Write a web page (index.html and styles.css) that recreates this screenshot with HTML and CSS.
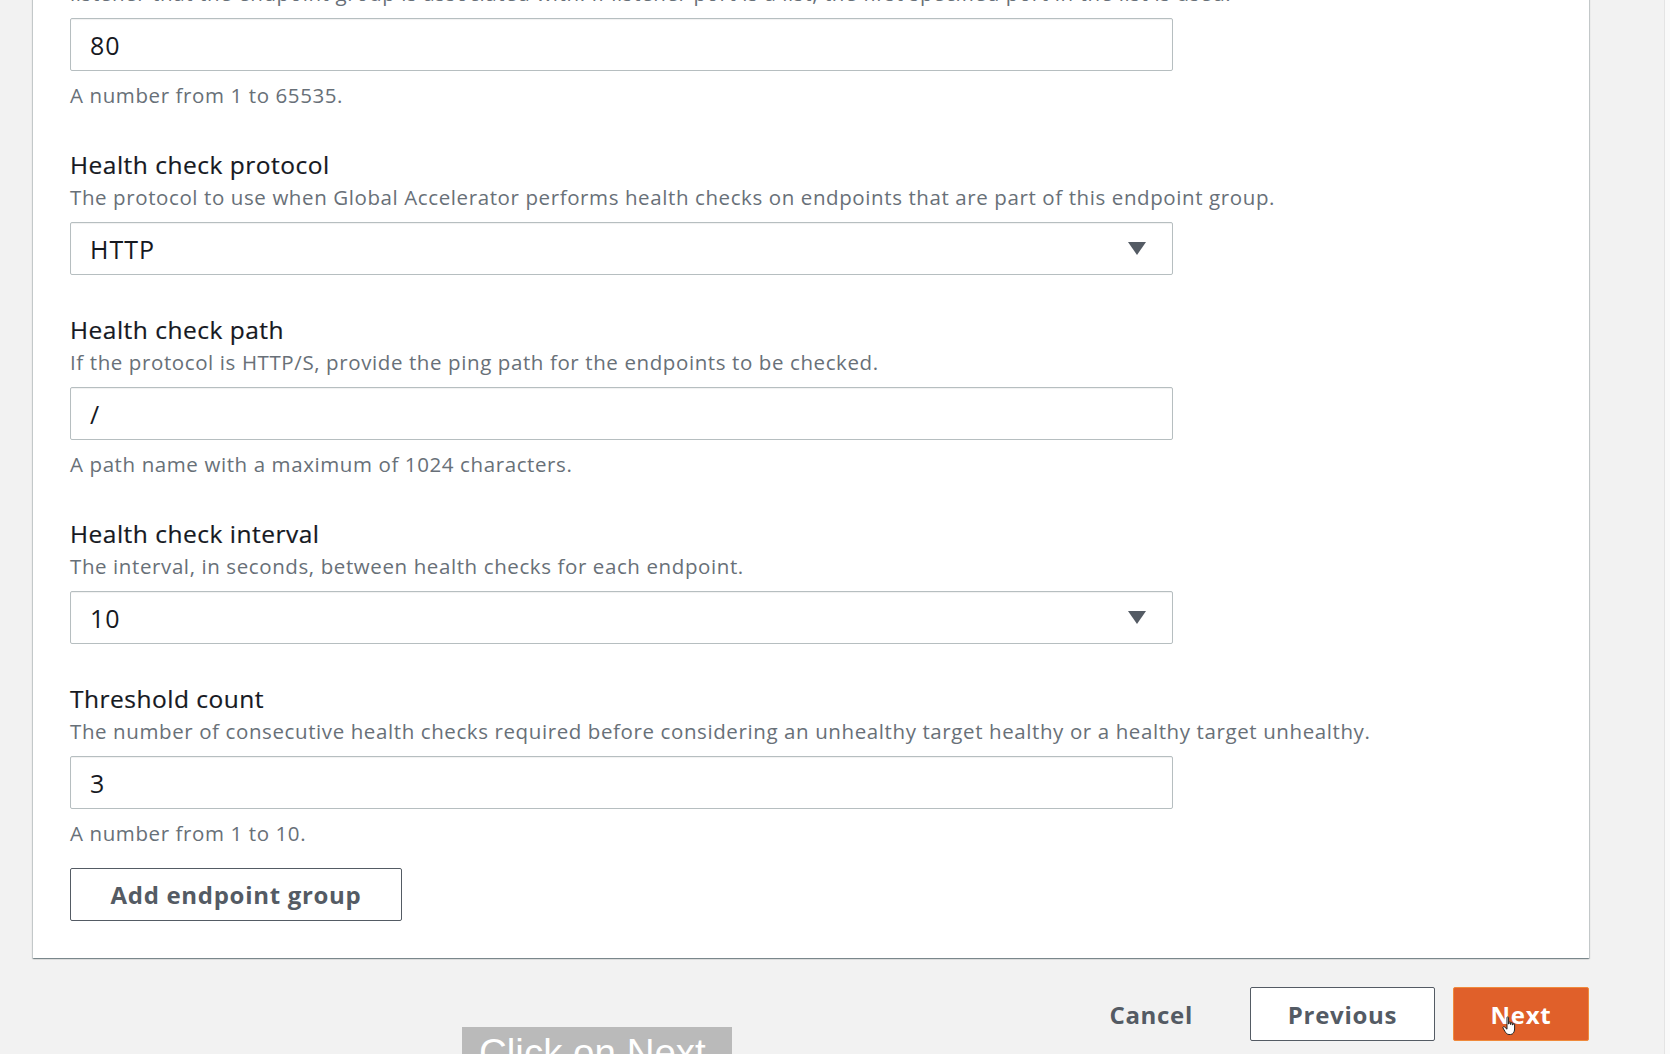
FILE: index.html
```html
<!DOCTYPE html>
<html lang="en">
<head>
<meta charset="utf-8">
<title>Configure endpoint groups</title>
<link rel="stylesheet" href="styles.css">
</head>
<body>
<div class="page">
  <div class="main">
    <section class="card">
      <div class="field first">
        <p class="desc">listener that the endpoint group is associated with. If listener port is a list, the first specified port in the list is used.</p>
        <div class="control input">80</div>
        <p class="hint">A number from 1 to 65535.</p>
      </div>

      <div class="field">
        <div class="label">Health check protocol</div>
        <p class="desc">The protocol to use when Global Accelerator performs health checks on endpoints that are part of this endpoint group.</p>
        <div class="control select">
          <span>HTTP</span>
          <svg class="caret" width="20" height="15" viewBox="0 0 20 15"><path d="M1 1 H19 L10 14 Z" fill="#545b64"/></svg>
        </div>
      </div>

      <div class="field">
        <div class="label">Health check path</div>
        <p class="desc">If the protocol is HTTP/S, provide the ping path for the endpoints to be checked.</p>
        <div class="control input">/</div>
        <p class="hint">A path name with a maximum of 1024 characters.</p>
      </div>

      <div class="field">
        <div class="label">Health check interval</div>
        <p class="desc">The interval, in seconds, between health checks for each endpoint.</p>
        <div class="control select">
          <span>10</span>
          <svg class="caret" width="20" height="15" viewBox="0 0 20 15"><path d="M1 1 H19 L10 14 Z" fill="#545b64"/></svg>
        </div>
      </div>

      <div class="field">
        <div class="label">Threshold count</div>
        <p class="desc">The number of consecutive health checks required before considering an unhealthy target healthy or a healthy target unhealthy.</p>
        <div class="control input">3</div>
        <p class="hint">A number from 1 to 10.</p>
      </div>

      <button class="btn btn-normal add">Add endpoint group</button>
    </section>

    <div class="footer">
      <button class="btn-link">Cancel</button>
      <button class="btn btn-normal prev">Previous</button>
      <button class="btn btn-primary next">Next</button>
    </div>
  </div>
  <div class="edge"></div>
</div>

<svg class="cursor" width="16" height="20" viewBox="0 0 16 20">
  <path d="M5 1.5 C5 0.7 6.6 0.7 6.6 1.5 V8 L7 8 V6.5 C7 5.7 8.6 5.7 8.6 6.5 V8.5 L9 8.5 V7.3 C9 6.5 10.6 6.5 10.6 7.3 V9 L11 9 V8.2 C11 7.4 12.6 7.4 12.6 8.2 V13 C12.6 16 11 18.5 8.5 18.5 H7 C5 18.5 4 17 3 15.5 L1 12 C0.5 11 1.8 10.2 2.6 11 L5 13.2 Z" fill="#fff" stroke="#222" stroke-width="1"/>
</svg>

<div class="caption">Click on Next</div>
</body>
</html>
```

FILE: styles.css
```css
html, body {
  margin: 0;
  padding: 0;
}

body {
  background: #f2f2f2;
  font-family: "Open Sans", "Noto Sans", sans-serif;
  color: #16191f;
  height: 1054px;
  overflow: hidden;
  position: relative;
}

.page {
  display: flex;
  height: 1054px;
}

.main {
  flex: 1;
  padding-left: 33px;
  padding-right: 75px;
}

.edge {
  width: 5px;
  background: #fafafa;
  border-left: 1px solid #e4e4e4;
}

.card {
  margin-top: -39px;
  padding: 20px 37px 37px;
  background: #ffffff;
  box-shadow: 0 1px 1px rgba(0, 28, 36, 0.3), 1px 1px 1px rgba(0, 28, 36, 0.15), -1px 1px 1px rgba(0, 28, 36, 0.15);
}

.field {
  margin-bottom: 40px;
}

.field:last-of-type {
  margin-bottom: 0;
}

.label {
  font-size: 24.5px;
  line-height: 30px;
  font-weight: 500;
  color: #16191f;
  letter-spacing: 0.5px;
  -webkit-text-stroke: 0.2px #16191f;
}

.desc {
  margin: 5px 0 0;
  font-size: 20.5px;
  line-height: 24px;
  color: #687078;
  letter-spacing: 0.6px;
  white-space: nowrap;
}

.field.first .desc {
  margin-top: 0;
}

.control {
  margin-top: 13px;
  width: 1103px;
  height: 53px;
  box-sizing: border-box;
  border: 1px solid #b6bec0;
  border-radius: 2px;
  background: #fff;
  box-shadow: inset 0 1px 1px rgba(0, 0, 0, 0.06);
  font-size: 25px;
  letter-spacing: 1px;
  color: #16191f;
  display: flex;
  align-items: center;
  padding: 0 25px 0 19px;
}

.select {
  justify-content: space-between;
}

.caret {
  display: block;
}

.hint {
  margin: 12px 0 0;
  padding-bottom: 3px;
  font-size: 20.5px;
  line-height: 24px;
  color: #687078;
  letter-spacing: 0.6px;
}

.btn {
  font-family: inherit;
  font-weight: 700;
  font-size: 24px;
  letter-spacing: 0.7px;
  height: 53px;
  box-sizing: border-box;
  border-radius: 2px;
  cursor: pointer;
  padding: 0;
}

.btn-normal {
  background: #fff;
  color: #545b64;
  border: 1px solid #545b64;
}

.add {
  margin-top: 20px;
  width: 332px;
  display: block;
}

.footer {
  margin-top: 29px;
  display: flex;
  justify-content: flex-end;
  align-items: center;
}

.btn-link {
  font-family: inherit;
  font-weight: 700;
  font-size: 24px;
  letter-spacing: 0.7px;
  color: #545b64;
  background: none;
  border: 0;
  padding: 0;
  margin-right: 57px;
}

.prev {
  width: 185px;
  height: 54px;
  margin-right: 18px;
}

.btn-primary {
  background: #e0602a;
  color: #fff;
  border: 1px solid #f08a3c;
}

.next {
  width: 136px;
  height: 54px;
}

.cursor {
  position: absolute;
  left: 1502px;
  top: 1016px;
}

.caption {
  position: absolute;
  left: 462px;
  top: 1027px;
  width: 253px;
  height: 60px;
  padding: 4px 0 0 17px;
  background: #bababa;
  color: #fff;
  font-family: "Liberation Sans", Arial, sans-serif;
  font-size: 38.5px;
  line-height: 44px;
  white-space: nowrap;
}
```
